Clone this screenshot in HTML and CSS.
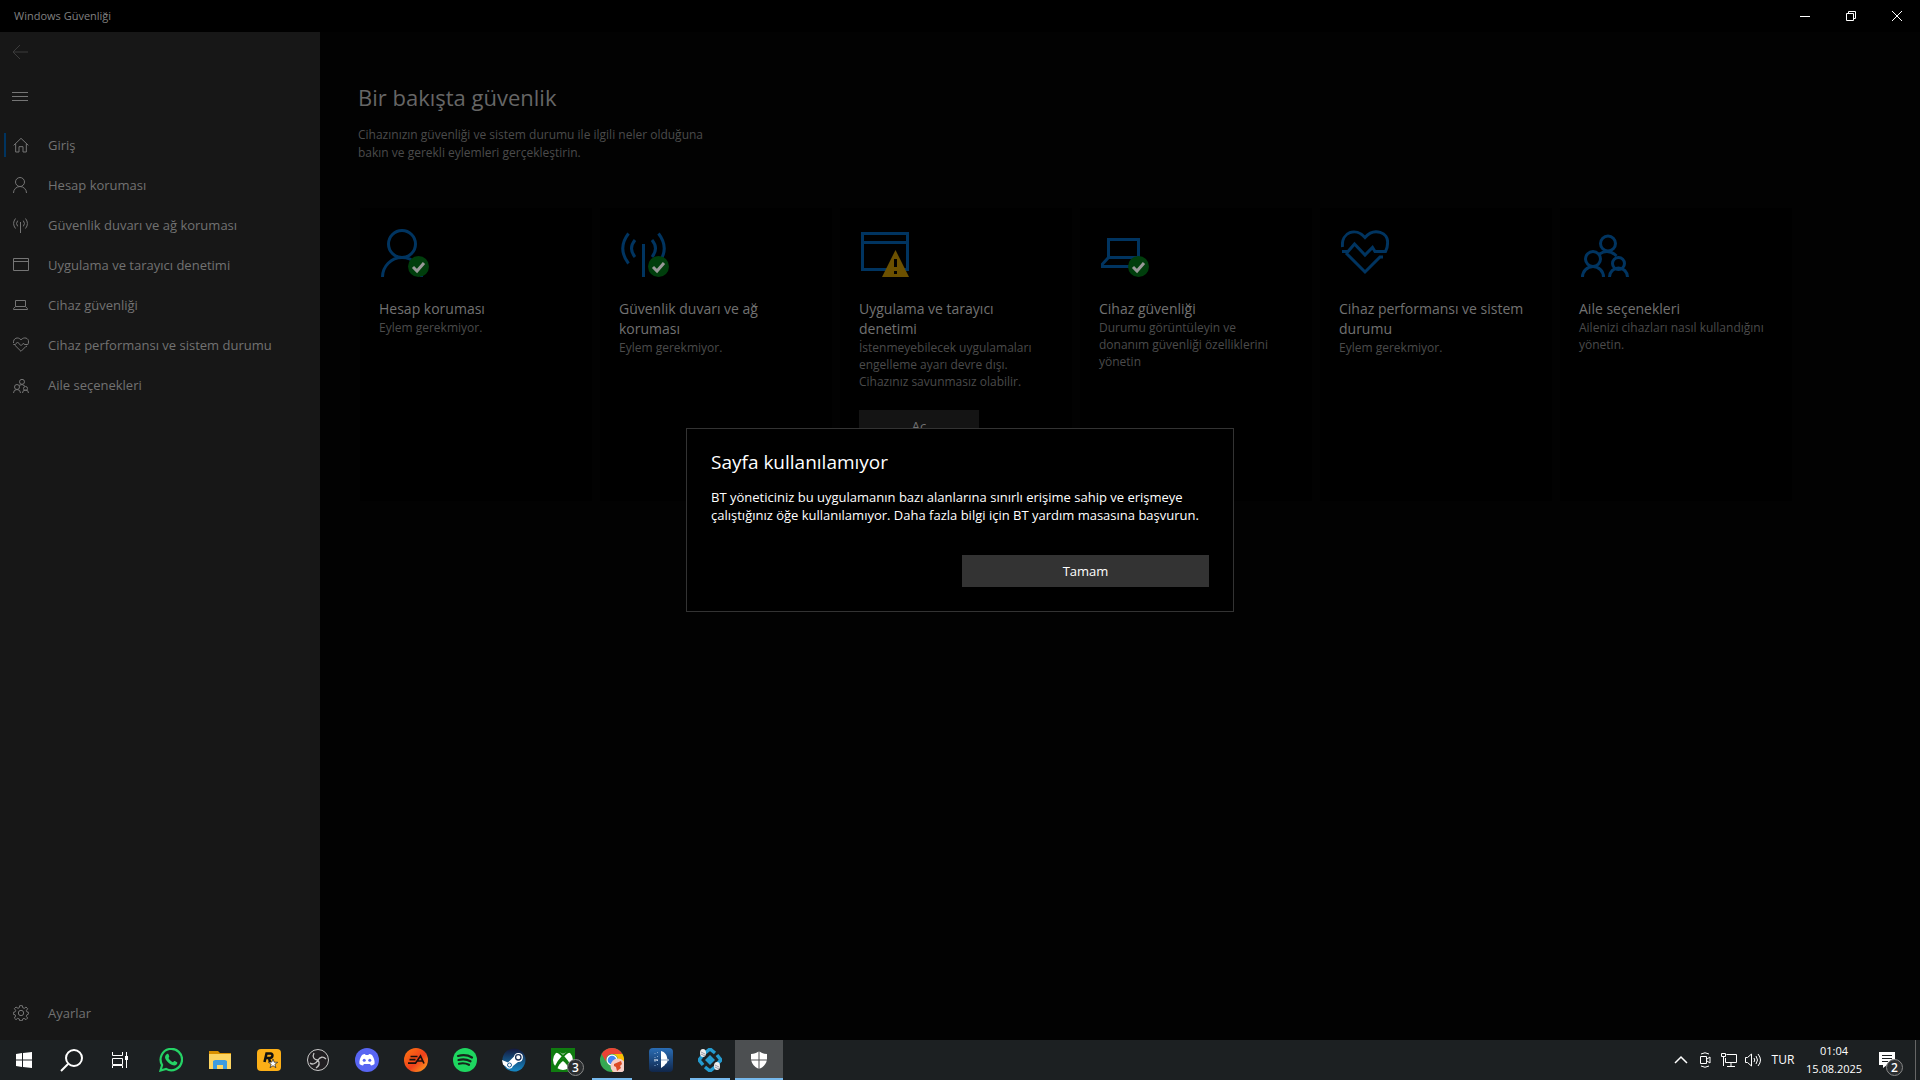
FILE: index.html
```html
<!DOCTYPE html>
<html lang="tr">
<head>
    <meta charset="UTF-8">
    <meta name="viewport" content="width=device-width, initial-scale=1.0">
    <title>Windows Güvenliği</title>
    <link rel="stylesheet" href="styles.css">
</head>
<body>
    <!-- Shared icons: used small in the menu and large in the cards -->
    <svg class="sprite" aria-hidden="true">
        <symbol id="i-home" viewBox="0 0 48 48"><path d="M2 25 24 4l22 21M8 20v25h10V29h12v16h10V20"/></symbol>
        <symbol id="i-person" viewBox="0 0 48 48"><circle cx="21" cy="15" r="13.5"/><path d="M1.5 48a19.5 19.5 0 0 1 39 0"/></symbol>
        <symbol id="i-signal" viewBox="0 0 48 48"><path d="M22.5 15v33M14 11q-7 8.500 0 17M31 11q7 8.500 0 17M7.500 4.500q-11.500 15 0 30M37.500 4.500q11.500 15 0 30"/></symbol>
        <symbol id="i-window" viewBox="0 0 48 48"><path d="M1.500 4.500h45v36h-45zM1.500 13.500h45"/></symbol>
        <symbol id="i-laptop" viewBox="0 0 48 48"><path d="M7.500 10.500h30v18h-30zM7.500 28.500 1.500 35v2.500h42V35l-6-6.500"/></symbol>
        <symbol id="i-heart" viewBox="0 0 48 48"><path d="M1.500 18C0 3 15-2 24 8.500 33-2 48 3 46.500 15q0 4-2 7.500H34l-2.500-4L24 26 13.500 15 7 22.500H1M5 24l19 19 15-15h3"/></symbol>
        <symbol id="i-family" viewBox="0 0 48 48"><circle cx="27" cy="14.500" r="7.500"/><circle cx="12" cy="30" r="7.500"/><circle cx="37.500" cy="34.500" r="6"/><path d="M1.500 48a10.500 10.500 0 0 1 21 0M28.500 48a9 9 0 0 1 18 0M18.500 25q9-6 17 2"/></symbol>
        <symbol id="i-gear" viewBox="0 0 48 48"><circle cx="24" cy="24" r="8"/><path d="m20 2 8 0 1 6 5 2 5-4 5 5-4 6 2 4 5 1v5l-5 2-2 5 4 5-5 5-6-4-4 2-1 5h-8l-1-5-5-2-5 4-5-5 4-6-2-4-5-1v-6l5-1 2-5-4-5 5-5 6 4 4-2z"/></symbol>
        <symbol id="i-ok" viewBox="0 0 48 48"><circle class="ok-disc" cx="37.500" cy="37.500" r="10.500"/><path class="ok-tick" d="m32 38 4 4 7-8"/></symbol>
    </svg>

    <div class="window">
        <header class="titlebar">
            <span class="app-title">Windows Güvenliği</span>
            <div class="window-buttons">
                <button aria-label="Simge durumuna küçült"><svg viewBox="0 0 12 12"><path d="M1 6.500h10"/></svg></button>
                <button aria-label="Geri yükle"><svg viewBox="0 0 12 12"><path d="M1.500 3.500h7v7h-7zM3.500 3.500v-2h7v7h-2"/></svg></button>
                <button aria-label="Kapat"><svg viewBox="0 0 12 12"><path d="m1 1 10 10M11 1 1 11"/></svg></button>
            </div>
        </header>

        <div class="content">
            <nav class="sidebar">
                <button class="side-button back" aria-label="Geri"><svg viewBox="0 0 16 16"><path d="M16 8H1M8 1 1 8l7 7"/></svg></button>
                <button class="side-button" aria-label="Menü"><svg viewBox="0 0 16 16"><path d="M0 4.500h16M0 8.500h16M0 12.500h16"/></svg></button>
                <div class="menu">
                    <a class="menu-item selected" href="#"><svg><use href="#i-home"/></svg>Giriş</a>
                    <a class="menu-item" href="#"><svg><use href="#i-person"/></svg>Hesap koruması</a>
                    <a class="menu-item" href="#"><svg><use href="#i-signal"/></svg>Güvenlik duvarı ve ağ koruması</a>
                    <a class="menu-item" href="#"><svg><use href="#i-window"/></svg>Uygulama ve tarayıcı denetimi</a>
                    <a class="menu-item" href="#"><svg><use href="#i-laptop"/></svg>Cihaz güvenliği</a>
                    <a class="menu-item" href="#"><svg><use href="#i-heart"/></svg>Cihaz performansı ve sistem durumu</a>
                    <a class="menu-item" href="#"><svg><use href="#i-family"/></svg>Aile seçenekleri</a>
                </div>
                <a class="menu-item" href="#"><svg><use href="#i-gear"/></svg>Ayarlar</a>
            </nav>

            <main class="page">
                <h1>Bir bakışta güvenlik</h1>
                <p class="intro">Cihazınızın güvenliği ve sistem durumu ile ilgili neler olduğuna<br>bakın ve gerekli eylemleri gerçekleştirin.</p>

                <div class="cards">
                    <section class="card">
                        <svg class="card-icon"><use href="#i-person"/><use href="#i-ok"/></svg>
                        <h2>Hesap koruması</h2>
                        <p>Eylem gerekmiyor.</p>
                    </section>
                    <section class="card">
                        <svg class="card-icon"><use href="#i-signal"/><use href="#i-ok"/></svg>
                        <h2>Güvenlik duvarı ve ağ<br>koruması</h2>
                        <p>Eylem gerekmiyor.</p>
                    </section>
                    <section class="card">
                        <svg class="card-icon" viewBox="0 0 48 48"><use href="#i-window"/><path class="warn" d="M34.500 21 48 48H21z"/><path class="warn-mark" d="M34.500 30v8M34.500 42v3"/></svg>
                        <h2>Uygulama ve tarayıcı<br>denetimi</h2>
                        <p>İstenmeyebilecek uygulamaları<br>engelleme ayarı devre dışı.<br>Cihazınız savunmasız olabilir.</p>
                        <button class="card-button">Aç</button>
                    </section>
                    <section class="card">
                        <svg class="card-icon"><use href="#i-laptop"/><use href="#i-ok"/></svg>
                        <h2>Cihaz güvenliği</h2>
                        <p>Durumu görüntüleyin ve<br>donanım güvenliği özelliklerini<br>yönetin</p>
                    </section>
                    <section class="card">
                        <svg class="card-icon"><use href="#i-heart"/></svg>
                        <h2>Cihaz performansı ve sistem<br>durumu</h2>
                        <p>Eylem gerekmiyor.</p>
                    </section>
                    <section class="card">
                        <svg class="card-icon"><use href="#i-family"/></svg>
                        <h2>Aile seçenekleri</h2>
                        <p>Ailenizi cihazları nasıl kullandığını<br>yönetin.</p>
                    </section>
                </div>
            </main>
        </div>

        <div class="overlay">
            <div class="dialog" role="dialog" aria-labelledby="dialog-title">
                <h2 id="dialog-title">Sayfa kullanılamıyor</h2>
                <p>BT yöneticiniz bu uygulamanın bazı alanlarına sınırlı erişime sahip ve erişmeye<br>çalıştığınız öğe kullanılamıyor. Daha fazla bilgi için BT yardım masasına başvurun.</p>
                <button>Tamam</button>
            </div>
        </div>
    </div>

    <footer class="taskbar">
        <div class="system-buttons">
            <button aria-label="Başlat"><svg viewBox="0 0 24 24" fill="#fff"><path d="m4 6 6-1v6.500H4zM11 5l9-1v7.500h-9zM4 12.500h6V19l-6-1zM11 12.500h9V20l-9-1z"/></svg></button>
            <button aria-label="Ara"><svg viewBox="0 0 24 24" fill="none" stroke="#fff" stroke-width="2"><circle cx="14" cy="10" r="8"/><path d="m8 16-7 7"/></svg></button>
            <button aria-label="Görev görünümü"><svg viewBox="0 0 24 24" fill="none" stroke="#fff"><path d="M4.500 4v3.500h10V4M4.500 10.500h10v6h-10zM4.500 20v-2.500h10V20M18.500 4v16"/><path fill="#fff" stroke="none" d="M17 8h3v4h-3z"/></svg></button>
        </div>

        <div class="apps">
            <button aria-label="WhatsApp">
                <svg viewBox="0 0 24 24"><path fill="none" stroke="#25d366" stroke-width="2.200" d="m1.500 22.500 1.600-5.500a10.700 10.700 0 1 1 4 3.900z"/><path fill="#25d366" d="M8 6c1-.6 1.500 0 2 1.500.6 1.500 0 1.700-.5 2.500 1 2 2.500 3.500 4.500 4.300 1-1 1.200-1.500 1.800-1.200l2.300 1.200c.6.400 0 2-1 2.700-3 2-10-3-11-7C5.800 8.500 6.500 7 8 6z"/></svg>
            </button>
            <button aria-label="Dosya Gezgini">
                <svg viewBox="0 0 24 24"><path fill="#d99000" d="M1 3h9l2 2h11v6H1z"/><path fill="#fcd462" d="M1 6h22v15H1z"/><path fill="#3d9be0" d="M5 21v-8l2-1h10l2 1v8h-4v-4H9v4z"/></svg>
            </button>
            <button aria-label="Rockstar Games">
                <svg viewBox="0 0 24 24"><rect width="24" height="22" y="1" rx="4" fill="#fcaf17"/><path fill="none" stroke="#111" stroke-width="2.500" d="m7.500 14 2-8.500h4c3 0 2.500 4.500-1 4.500H9M12 10l1 4"/><path fill="#fff" stroke="#222" stroke-width=".7" d="m16 11 1.200 3.200 3.500.1-2.800 2 1 3.400-2.900-2-3 2 1.200-3.400-2.900-2.100 3.500-.1z"/></svg>
            </button>
            <button aria-label="OBS Studio">
                <svg viewBox="0 0 24 24"><circle cx="12" cy="12" r="10.500" fill="#211f22" stroke="#c9c9c9"/><g fill="none" stroke="#c4c4c4" stroke-width="1.300"><path d="M8 5c-2 4 0 7 4 7 2-3 5-4 8-1M12 12c2 3 1 6-2 8M4 15c2 2 6 1 8-3"/></g></svg>
            </button>
            <button aria-label="Discord">
                <svg viewBox="0 0 24 24"><circle cx="12" cy="12" r="12" fill="#5865f2"/><path fill="#fff" d="M7 7c1-.6 2-.9 3-1l.6 1h2.800l.6-1c1 .1 2 .4 3 1 2 3 3 6 2.500 9-1 .9-2 1.300-3.500 1.500l-1-1.500H9l-1 1.500C6.500 17.300 5.500 16.900 4.500 16 4 13 5 10 7 7z"/><circle cx="9.200" cy="12.300" r="1.500" fill="#5865f2"/><circle cx="14.800" cy="12.300" r="1.500" fill="#5865f2"/></svg>
            </button>
            <button aria-label="EA">
                <svg viewBox="0 0 24 24"><defs><linearGradient id="ea" x2="1" y2="1"><stop stop-color="#ff7a10"/><stop offset=".55" stop-color="#f0401c"/><stop offset="1" stop-color="#ffae20"/></linearGradient></defs><circle cx="12" cy="12" r="12" fill="url(#ea)"/><path fill="none" stroke="#18100c" stroke-width="1.700" d="M6.500 8.500h7M5.500 11.700h6M4 15.200h7.500l5-7.200 3.500 7.500M13.500 13h5"/></svg>
            </button>
            <button aria-label="Spotify">
                <svg viewBox="0 0 24 24"><circle cx="12" cy="12" r="12" fill="#1ed760"/><path fill="none" stroke="#17251c" stroke-width="2.200" stroke-linecap="round" d="M5 8c5-1.400 10-.9 14 1.500M5.500 12c4.500-1.200 8.500-.7 12 1.300M6 15.700c4-.9 7-.5 10 1.100"/></svg>
            </button>
            <button aria-label="Steam">
                <svg viewBox="0 0 24 24"><defs><linearGradient id="steam" x2="0" y2="1"><stop stop-color="#14183c"/><stop offset="1" stop-color="#1588c5"/></linearGradient></defs><circle cx="12" cy="12" r="11.500" fill="url(#steam)"/><path fill="#fff" d="m0 12 6 2.500 6-6a4.500 4.500 0 1 1 4 5.500l-5 4a3.800 3.800 0 0 1-7 .8L1 16.500z"/><circle cx="16.300" cy="9.300" r="2.700" fill="#fff" stroke="#1a3056" stroke-width="1.300"/><circle cx="7.500" cy="17" r="2" fill="none" stroke="#1c5c94"/></svg>
            </button>
            <button aria-label="Xbox">
                <svg viewBox="0 0 24 24"><path fill="#107c10" d="M0 0h24v24H0z"/><circle cx="12" cy="12" r="10" fill="#fff"/><path fill="#107c10" d="M5.500 4.500C8 4 10.500 5 12 6c1.500-1 4-2 6.500-1.500L17 2H7zM12 9.500c-4 3-7 7-7.500 10L8 23h8l3.500-3.500c-.5-3-3.500-7-7.500-10z"/><path fill="#fff" d="M12 13c-2.500 2-4.500 4.500-5.500 7.300a10 10 0 0 0 11 0C16.500 17.500 14.500 15 12 13z"/><path fill="none" stroke="#107c10" stroke-width="2" d="M4 3.500C8 3 16 11 20 20M20 3.500C16 3 8 11 4 20"/></svg>
                <span class="badge">3</span>
            </button>
            <button class="running" aria-label="Google Chrome">
                <svg viewBox="0 0 24 24"><circle cx="12" cy="12" r="12" fill="#34a853"/><path fill="#ea4335" d="M1.600 6A12 12 0 0 1 22.400 6H12a6 6 0 0 0-5.200 9z"/><path fill="#fbbc04" d="M22.400 6A12 12 0 0 1 12 24l5.200-9A6 6 0 0 0 12 6z"/><circle cx="12" cy="12" r="5.500" fill="#fff"/><circle cx="12" cy="12" r="4.300" fill="#4285f4"/><circle cx="18" cy="18" r="7.500" fill="#f6cfc7"/><path fill="#dc4b25" d="m14 16 7-3 1 3-2 2 1 2-4 3-1-4-2-1z"/></svg>
            </button>
            <button aria-label="Oyun">
                <svg viewBox="0 0 24 24"><defs><linearGradient id="game" x2="0" y2="1"><stop stop-color="#2a6db5"/><stop offset="1" stop-color="#10264a"/></linearGradient></defs><rect width="24" height="24" rx="4" fill="url(#game)"/><path fill="#fff" d="M12 3c4 1 6 4 6.500 8.500H12zM12 12.500h6.500c0 3-2 3-3 5L12 20z"/><path fill="none" stroke="#84a7cf" stroke-dasharray="1 3" d="M6 5v14M8.500 4v16"/><path stroke="#fff" d="M12 12h8M5 12h4"/></svg>
            </button>
            <button class="running" aria-label="Araç">
                <svg viewBox="0 0 24 24"><path fill="#259bd0" d="m12 7 5 5-5 5-5-5z"/><path fill="none" stroke="#259bd0" stroke-width="3.500" d="m7 5 5-4 5 4M19 7l4 5-4 4M17 19l-5 4-5-4M5 17l-4-5 4-5"/><g fill="#eee"><ellipse cx="5" cy="5" rx="3" ry="4"/><ellipse cx="19" cy="18" rx="3" ry="4"/></g><path stroke="#778" stroke-width=".7" d="m3 4 4 2M3 6l4 2M17 17l4 2M17 19l4 2"/></svg>
            </button>
            <button class="running active" aria-label="Windows Güvenliği">
                <svg viewBox="0 0 24 24" fill="#fff"><path d="M11.500 3.500v8H4V6c3 0 5.500-1 7.500-2.500zM12.500 3.500C14.500 5 17 6 20 6v5.500h-7.500zM4.200 12.500h7.300v8.200c-4-1.700-6.500-4.500-7.300-8.200zM12.500 12.500h7.300c-.8 3.700-3.300 6.500-7.300 8.200z"/></svg>
            </button>
        </div>

        <div class="tray">
            <button aria-label="Gizli simgeleri göster"><svg viewBox="0 0 16 16"><path stroke-width="1.500" d="m2 11 6-6 6 6"/></svg></button>
            <button aria-label="Şimdi Toplantı Yap"><svg viewBox="0 0 16 16"><path d="M3.500 4.500h6v7h-6zM10 7l3-2v6l-3-2M4 2q4-2.500 8 0M4 14q4 2.500 8 0"/></svg></button>
            <button aria-label="Ağ"><svg viewBox="0 0 16 16"><path d="M5.500 2.500h10v8h-11V6M.5 1.500h4v3h-4zM2.500 5v9M10 11v3M6 14.500h8"/></svg></button>
            <button aria-label="Ses"><svg viewBox="0 0 16 16"><path d="M.5 5.500h2l4-3.500v12l-4-3.500h-2zM9 6q1.500 2 0 4M11 4q3 4 0 8M13 2q5 6 0 12"/></svg></button>
            <button class="language">TUR</button>
            <button class="clock"><time>01:04</time><span>15.08.2025</span></button>
            <button class="notifications" aria-label="Bildirimler">
                <svg viewBox="0 0 16 16"><path fill="#fff" stroke="none" d="M0 0h16v13H8l-4 3v-3H0z"/><path class="lines" d="M3 3.500h10M3 6.500h10M3 9.500h6"/></svg>
                <span class="badge">2</span>
            </button>
        </div>
    </footer>
</body>
</html>
```
FILE: styles.css
```css
* {
    box-sizing: border-box;
}
body {
    margin: 0;
    height: 100vh;
    display: flex;
    flex-direction: column;
    overflow: hidden;
    background-color: #000;
    font-family: "Open Sans", "Noto Sans", sans-serif;
    font-size: 13px;
    line-height: 18px;
    color: #727272;
}
h1, h2, p {
    margin: 0;
    font-weight: 400;
}
button {
    padding: 0;
    border: 0;
    background: none;
    color: inherit;
    font: inherit;
}
a {
    color: inherit;
    text-decoration: none;
}
svg {
    display: block;
}
.sprite {
    position: absolute;
    width: 0;
    height: 0;
}

/* Window */
.window {
    position: relative;
    flex: 1;
    min-height: 0;
    display: flex;
    flex-direction: column;
}
.titlebar {
    height: 32px;
    flex: none;
    display: flex;
    justify-content: space-between;
    align-items: center;
    padding-left: 14px;
    background-color: #000;
}
.app-title {
    font-size: 11px;
    color: #808080;
}
.window-buttons {
    display: flex;
}
.window-buttons button {
    width: 46px;
    height: 32px;
    display: grid;
    place-items: center;
}
.window-buttons svg {
    width: 12px;
    height: 12px;
    fill: none;
    stroke: #fff;
}
.content {
    flex: 1;
    min-height: 0;
    display: flex;
}

/* Sidebar */
.sidebar {
    width: 320px;
    flex: none;
    display: flex;
    flex-direction: column;
    padding-bottom: 7px;
    background-color: #171717;
}
.sidebar svg {
    width: 16px;
    height: 16px;
    flex: none;
    fill: none;
    stroke: #757575;
    stroke-width: 3;
}
.side-button {
    width: 40px;
    height: 40px;
    margin-bottom: 4px;
    display: grid;
    place-items: center;
}
.sidebar .side-button svg {
    stroke-width: 1;
}
.sidebar .back svg {
    stroke: #3c3c3c;
}
.menu {
    flex: 1;
    padding-top: 5px;
}
.menu-item {
    height: 40px;
    display: flex;
    align-items: center;
    gap: 19px;
    padding-left: 13px;
}
.menu-item.selected {
    background: linear-gradient(#003460, #003460) 4px center / 2px 24px no-repeat;
}

/* Page */
.page {
    flex: 1;
    padding: 48px 40px 0 38px;
    background-color: #020202;
}
h1 {
    font-size: 22px;
    line-height: 34px;
    color: #666;
}
.intro {
    margin-top: 12px;
    font-size: 12px;
    line-height: 18px;
    color: #4b4b4b;
}
.cards {
    display: grid;
    grid-template-columns: repeat(6, 232px);
    gap: 8px;
    margin: 46px 0 0 2px;
}
.card {
    min-height: 293px;
    padding: 21px 8px 0 19px;
    background-color: #000;
}
.card-icon {
    width: 48px;
    height: 48px;
    margin: 0 0 22px 2px;
    fill: none;
    stroke: #003460;
    stroke-width: 3;
}
.ok-disc {
    fill: #003e0c;
    stroke: none;
}
.ok-tick {
    stroke: #999;
}
.warn {
    fill: #6b5000;
    stroke: none;
}
.warn-mark {
    stroke: #000;
}
.card h2 {
    font-size: 14px;
    line-height: 20px;
}
.card p {
    font-size: 12px;
    line-height: 17px;
    color: #4b4b4b;
}
.card-button {
    width: 120px;
    height: 32px;
    margin-top: 20px;
    background-color: #141414;
}

/* Dialog */
.overlay {
    position: absolute;
    inset: 0;
    display: grid;
    place-items: center;
}
.dialog {
    display: flex;
    flex-direction: column;
    width: 548px;
    padding: 20px 24px 24px;
    border: 1px solid #333;
    background-color: #000;
    color: #fff;
}
.dialog h2 {
    font-size: 19px;
    line-height: 26px;
}
.dialog p {
    margin: 13px 0 31px;
    white-space: nowrap;
}
.dialog button {
    align-self: flex-end;
    width: 247px;
    height: 32px;
    background-color: #333;
}

/* Taskbar */
.taskbar {
    height: 40px;
    flex: none;
    display: flex;
    background-color: #1c2022;
    color: #fff;
}
.taskbar button {
    position: relative;
    height: 40px;
    display: grid;
    place-items: center;
}
.system-buttons,
.apps,
.tray {
    display: flex;
}
.system-buttons button,
.apps button {
    width: 48px;
}
.system-buttons svg,
.apps svg {
    width: 24px;
    height: 24px;
}
.apps {
    gap: 1px;
    margin-left: 3px;
}
.apps .running {
    background: linear-gradient(#76b9ed, #76b9ed) center bottom / 40px 2px no-repeat;
}
.apps .active {
    background-color: #4c4f51;
    background-size: 48px 2px;
}
.badge {
    position: absolute;
    left: 28px;
    top: 19px;
    width: 17px;
    height: 17px;
    border: 1px solid #888;
    border-radius: 50%;
    background-color: #2b2e30;
    font-size: 12px;
    line-height: 15px;
    font-weight: 600;
    text-align: center;
}
.tray {
    margin-left: auto;
    padding-right: 4px;
    font-size: 11px;
}
.tray button {
    width: 24px;
}
.tray svg {
    width: 16px;
    height: 16px;
    fill: none;
    stroke: #fff;
}
.tray .language {
    width: 36px;
    font-size: 12px;
}
.tray .clock {
    width: 66px;
    align-content: center;
}
.tray .notifications {
    width: 49px;
    padding-right: 8px;
    border-right: 1px solid #666;
}
.tray .lines {
    stroke: #1c2022;
}
.tray .badge {
    left: 19px;
}
```
